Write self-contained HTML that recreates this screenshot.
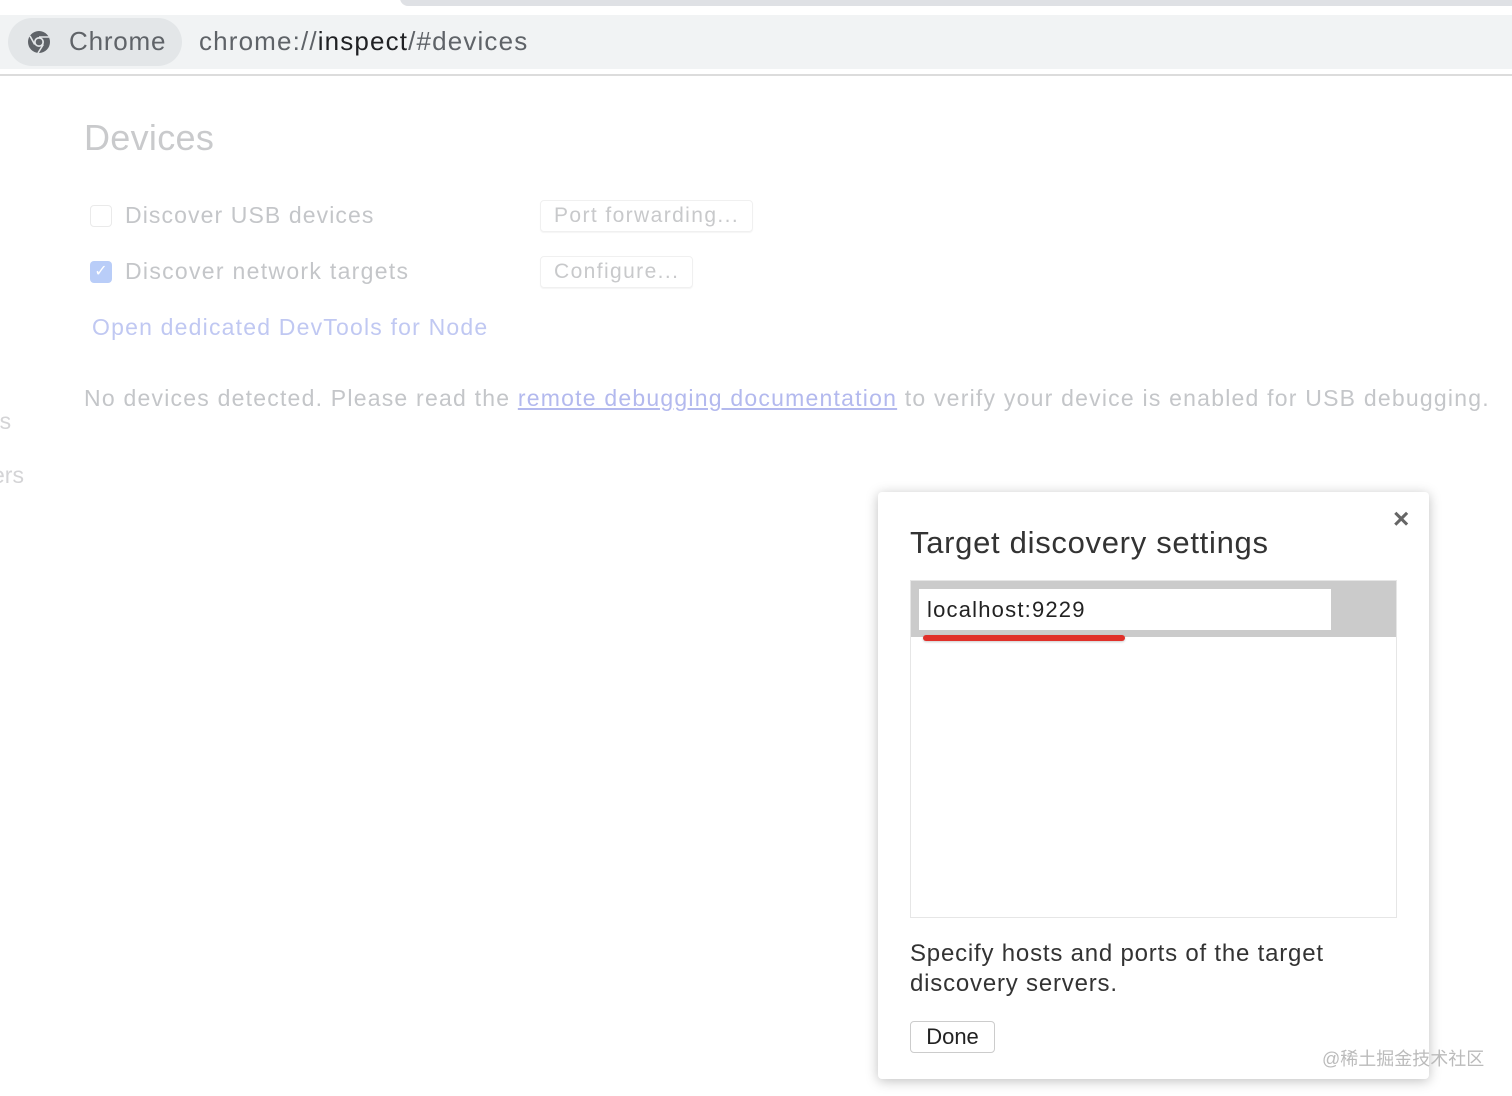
<!DOCTYPE html>
<html><head><meta charset="utf-8"><style>
body{margin:0;width:1512px;height:1096px;background:#fff;position:relative;overflow:hidden;font-family:"Liberation Sans",Arial,sans-serif}
.a{position:absolute;white-space:nowrap}
.g{color:#c4c6c9;font-size:23px;letter-spacing:1.1px}
.btn{position:absolute;border:1px solid #f0f0f0;border-radius:4px;color:#c8c9cb;font-size:21px;padding:0 13px;height:30px;line-height:30px;box-shadow:0 1px 1px #f4f4f4;letter-spacing:1.4px}
</style></head><body>
<div class="a" style="left:400px;top:-10px;width:1130px;height:16px;background:#dfe1e5;border-radius:10px"></div>
<div class="a" style="left:0;top:15px;width:1512px;height:54px;background:#f1f3f4"></div>
<div class="a" style="left:8px;top:18px;width:174px;height:48px;background:#e3e6e8;border-radius:24px"></div>
<svg class="a" style="left:27px;top:30px" width="24" height="24" viewBox="0 0 24 24"><circle cx="12" cy="12" r="11" fill="#5f6368"/><circle cx="12" cy="12" r="5" fill="#e3e6e8"/><circle cx="12" cy="12" r="3.3" fill="#5f6368"/><path d="M12 7 L22 7 M7.7 14.5 L3 6 M16.3 14.5 L11 23" stroke="#e3e6e8" stroke-width="1.6"/></svg>
<div class="a" style="left:69px;top:26px;font-size:26px;color:#5f6368;letter-spacing:0.8px">Chrome</div>
<div class="a" style="left:199px;top:26px;font-size:26px;color:#5f6368;letter-spacing:1.15px">chrome://<span style="color:#202124">inspect</span>/#devices</div>
<div class="a" style="left:0;top:74px;width:1512px;height:2px;background:#dcdcdc"></div>

<div class="a" style="left:84px;top:117px;font-size:36px;color:#c9cacc;letter-spacing:0.3px">Devices</div>
<div class="a" style="left:90px;top:205px;width:20px;height:20px;border:1px solid #eaeaea;border-radius:4px"></div>
<div class="a g" style="left:125px;top:202px">Discover USB devices</div>
<div class="btn" style="left:540px;top:200px">Port forwarding...</div>
<div class="a" style="left:90px;top:261px;width:22px;height:22px;background:#b9cdf8;border-radius:4px;color:#fff;font-size:16px;text-align:center;line-height:22px">✓</div>
<div class="a g" style="left:125px;top:258px;letter-spacing:1.3px">Discover network targets</div>
<div class="btn" style="left:540px;top:256px">Configure...</div>
<div class="a" style="left:92px;top:314px;font-size:23px;color:#c0c8f2;letter-spacing:1.2px">Open dedicated DevTools for Node</div>
<div class="a g" style="left:84px;top:385px;letter-spacing:1.22px">No devices detected. Please read the <span style="color:#b3b9ee;text-decoration:underline">remote debugging documentation</span> to verify your device is enabled for USB debugging.</div>
<div class="a" style="left:-8px;top:408px;font-size:23px;color:#d4d4d6">rs</div>
<div class="a" style="left:-8px;top:462px;font-size:23px;color:#d4d4d6">ers</div>

<div class="a" style="left:878px;top:492px;width:551px;height:587px;background:#fff;border-radius:4px;box-shadow:0 2px 12px rgba(0,0,0,.25)"></div>
<div class="a" style="left:1393px;top:503px;font-size:28px;color:#666;font-weight:bold">×</div>
<div class="a" style="left:910px;top:525px;font-size:31px;color:#333;letter-spacing:0.7px">Target discovery settings</div>
<div class="a" style="left:910px;top:580px;width:485px;height:336px;border:1px solid #e6e6e6;background:#fff"></div>
<div class="a" style="left:911px;top:581px;width:485px;height:56px;background:#cbcbcb"></div>
<div class="a" style="left:919px;top:589px;width:412px;height:41px;background:#fff"></div>
<div class="a" style="left:927px;top:597px;font-size:22px;color:#222;letter-spacing:1.2px">localhost:9229</div>
<div class="a" style="left:923px;top:635px;width:202px;height:6px;background:#e0302a;border-radius:3px;box-shadow:0 1px 2px rgba(0,0,0,.2)"></div>
<div class="a" style="left:910px;top:939px;font-size:24px;color:#333;line-height:30px;white-space:normal;width:480px;letter-spacing:0.8px">Specify hosts and ports of the target discovery servers.</div>
<div class="a" style="left:910px;top:1021px;width:83px;height:30px;border:1px solid #ccc;border-radius:4px;font-size:22px;color:#222;text-align:center;line-height:30px;background:#fff">Done</div>
<div class="a" style="left:1322px;top:1045px;font-size:18px;color:#bbb;font-family:'Liberation Sans','Noto Sans CJK SC',sans-serif">@稀土掘金技术社区</div>
</body></html>
